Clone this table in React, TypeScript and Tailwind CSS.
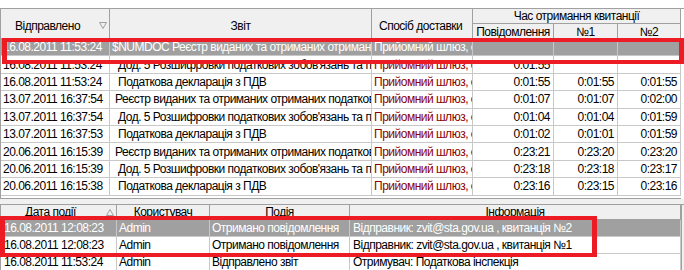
const topRows = [
  { date: "16.08.2011 11:53:24", report: "$NUMDOC Реєстр виданих та отриманих отриманих податкових накладних", indent: 0, t1: "", t2: "", t3: "", selected: true },
  { date: "16.08.2011 11:53:24", report: "Дод. 5 Розшифровки податкових зобов'язань та податкового кредиту", indent: 2, t1: "0:01:55", t2: "", t3: "" },
  { date: "16.08.2011 11:53:24", report: "Податкова декларація з ПДВ", indent: 2, t1: "0:01:55", t2: "0:01:55", t3: "0:01:55" },
  { date: "13.07.2011 16:37:54", report: "Реєстр виданих та отриманих отриманих податкових накладних", indent: 1, t1: "0:01:07", t2: "0:01:07", t3: "0:02:00" },
  { date: "13.07.2011 16:37:54", report: "Дод. 5 Розшифровки податкових зобов'язань та податкового кредиту", indent: 2, t1: "0:01:04", t2: "0:01:04", t3: "0:01:59" },
  { date: "13.07.2011 16:37:53", report: "Податкова декларація з ПДВ", indent: 2, t1: "0:01:02", t2: "0:01:01", t3: "0:01:59" },
  { date: "20.06.2011 16:15:39", report: "Реєстр виданих та отриманих отриманих податкових накладних", indent: 1, t1: "0:23:21", t2: "0:23:20", t3: "0:23:20" },
  { date: "20.06.2011 16:15:39", report: "Дод. 5 Розшифровки податкових зобов'язань та податкового кредиту", indent: 2, t1: "0:23:18", t2: "0:23:18", t3: "0:23:17" },
  { date: "20.06.2011 16:15:38", report: "Податкова декларація з ПДВ", indent: 2, t1: "0:23:16", t2: "0:23:15", t3: "0:23:16" },
];

const events = [
  { date: "16.08.2011 12:08:23", user: "Admin", event: "Отримано повідомлення", info: "Відправник: zvit@sta.gov.ua , квитанція №2", selected: true },
  { date: "16.08.2011 12:08:23", user: "Admin", event: "Отримано повідомлення", info: "Відправник: zvit@sta.gov.ua , квитанція №1" },
  { date: "16.08.2011 11:53:24", user: "Admin", event: "Відправлено звіт", info: "Отримувач: Податкова інспекція" },
];

const indents = ["pl-[2px]", "pl-[5px]", "pl-[8px]"];

const SortArrow = ({ up }: { up?: boolean }) => (
  <svg width="8" height="7" viewBox="0 0 8 7" className="shrink-0">
    {up ? (
      <path d="M0.5 6.5 L4 0.5 L7.5 6.5 Z" fill="none" stroke="#a0a0a0" />
    ) : (
      <path d="M0.5 0.5 L7.5 0.5 L4 6.5 Z" fill="none" stroke="#a0a0a0" />
    )}
  </svg>
);

const cell = "h-full flex items-center overflow-hidden whitespace-pre border-r border-[#c8c8c8] shrink-0";
const head = "h-full flex items-center justify-center overflow-hidden whitespace-nowrap border-r border-[#a0a0a0] shrink-0";

const App = () => {
  return (
    <div className="relative w-[684px] h-[270px] overflow-hidden bg-white text-black text-[12px] tracking-[-0.5px] leading-none font-['Liberation_Sans',Arial,sans-serif]">
      <div className="h-[9px] border-b border-[#a0a0a0] bg-white" />

      {/* top grid */}
      <div className="h-[190px] flex">
        <div className="w-[681px] h-full border-l border-b border-[#a0a0a0] flex flex-col">
          <div className="h-[30px] flex bg-[#f0f0f0] border-b border-[#a0a0a0] shrink-0">
            <div className={`${head} w-[109px] !justify-start pl-[14px] pt-[4px] gap-[19px]`}>
              <span>Відправлено</span>
              <SortArrow />
            </div>
            <div className={`${head} w-[262px] pt-[4px]`}>Звіт</div>
            <div className={`${head} w-[101px] !justify-start pl-[7px] pt-[4px]`}>Спосіб доставки</div>
            <div className="w-[208px] h-full flex flex-col shrink-0">
              <div className="h-[16px] border-b border-r border-[#a0a0a0] flex items-center justify-center">
                Час отримання квитанції
              </div>
              <div className="flex-1 flex">
                <div className={`${head} w-[81px] pt-[2px]`}>Повідомлення</div>
                <div className={`${head} w-[64px] pt-[2px]`}>№1</div>
                <div className={`${head} w-[63px] pt-[2px]`}>№2</div>
              </div>
            </div>
          </div>

          {topRows.map((r, i) => (
            <div
              key={i}
              className={`h-[17.4px] flex shrink-0 border-b border-[#c8c8c8] ${r.selected ? "bg-[#a0a0a0] text-white" : ""}`}
            >
              <div className={`${cell} w-[109px] pl-[2px]`}>{r.date}</div>
              <div className={`${cell} w-[262px] ${indents[r.indent]}`}>{r.report}</div>
              <div className={`${cell} w-[101px] pl-[2px] ${r.selected ? "text-white" : "text-[#8b0000]"}`}>
                Прийомний шлюз, електронна пошта
              </div>
              <div className={`${cell} w-[81px] justify-end pr-[3px]`}>{r.t1}</div>
              <div className={`${cell} w-[64px] justify-end pr-[3px]`}>{r.t2}</div>
              <div className={`${cell} w-[63px] justify-end pr-[3px]`}>{r.t3}</div>
            </div>
          ))}
        </div>
        <div className="flex-1 bg-white" />
      </div>

      {/* splitter */}
      <div className="h-[5px] bg-[#f0f0f0]" />

      {/* bottom grid */}
      <div className="h-[66px] flex border-t border-[#a0a0a0]">
        <div className="w-[681px] h-full border-l border-[#a0a0a0] flex flex-col">
          <div className="h-[15px] flex bg-[#f0f0f0] border-b border-[#a0a0a0] shrink-0">
            <div className={`${head} w-[116px] !justify-start pl-[24px] gap-[30px]`}>
              <span>Дата події</span>
              <SortArrow up />
            </div>
            <div className={`${head} w-[93px]`}>Користувач</div>
            <div className={`${head} w-[140px]`}>Подія</div>
            <div className={`${head} w-[331px]`}>Інформація</div>
          </div>
          {events.map((e, i) => (
            <div
              key={i}
              className={`h-[17px] flex shrink-0 border-b border-[#c8c8c8] ${e.selected ? "bg-[#a0a0a0] text-white" : ""}`}
            >
              <div className={`${cell} w-[116px] pl-[3px]`}>{e.date}</div>
              <div className={`${cell} w-[93px] pl-[2px]`}>{e.user}</div>
              <div className={`${cell} w-[140px] pl-[2px]`}>{e.event}</div>
              <div className={`${cell} w-[331px] pl-[3px]`}>{e.info}</div>
            </div>
          ))}
        </div>
        <div className="flex-1 bg-[#f0f0f0] border-l border-[#a0a0a0]" />
      </div>

      {/* red highlight marks */}
      <div className="absolute left-[2px] top-[38px] w-[682px] h-[26px] border-y-4 border-x-[5px] border-[#ed1c24]" />
      <div className="absolute left-0 top-[216px] w-[597px] h-[41px] border-y-4 border-x-[5px] border-[#ed1c24]" />
    </div>
  );
};

export default App;
